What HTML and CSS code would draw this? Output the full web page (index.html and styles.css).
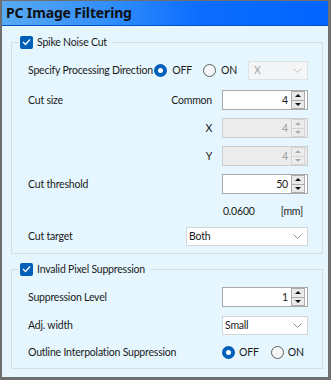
FILE: index.html
```html
<!doctype html>
<html lang="en">
	<head>
		<meta charset="UTF-8" />
		<meta name="viewport" content="width=device-width, initial-scale=1.0" />
		<title>PC Image Filtering</title>
		<link rel="stylesheet" href="styles.css">
	</head>
	<body>
		<div class="window">
			<div class="titlebar">PC Image Filtering</div>

			<fieldset class="group group-spike">
				<legend><span class="check"><svg width="9" height="8" viewBox="0 0 9 8"><polyline points="1,4 3.5,6.5 8,1.5" fill="none" stroke="#fff" stroke-width="1.3"/></svg></span>Spike Noise Cut</legend>

				<div class="row row-first">
					<span class="label">Specify Processing Direction</span>
					<span class="radio selected"></span><span class="radio-text">OFF</span>
					<span class="radio"></span><span class="radio-text">ON</span>
					<div class="select disabled select-dir">
						<span>X</span>
						<svg width="9" height="5" viewBox="0 0 9 5"><polyline points="0.5,0.5 4.5,4.5 8.5,0.5" fill="none" stroke="#c4c4c4"/></svg>
					</div>
				</div>

				<div class="row">
					<span class="label">Cut size</span>
					<span class="sub">Common</span>
					<div class="spin"><span class="value">4</span><span class="spin-btns"><span class="up"></span><span class="down"></span></span></div>
				</div>

				<div class="row">
					<span class="label"></span>
					<span class="sub">X</span>
					<div class="spin disabled"><span class="value">4</span><span class="spin-btns"><span class="up"></span><span class="down"></span></span></div>
				</div>

				<div class="row">
					<span class="label"></span>
					<span class="sub">Y</span>
					<div class="spin disabled"><span class="value">4</span><span class="spin-btns"><span class="up"></span><span class="down"></span></span></div>
				</div>

				<div class="row">
					<span class="label">Cut threshold</span>
					<div class="spin"><span class="value">50</span><span class="spin-btns"><span class="up"></span><span class="down"></span></span></div>
				</div>

				<div class="row row-mm">
					<span class="label"></span>
					<span class="mm-value">0.0600</span>
					<span class="unit">[mm]</span>
				</div>

				<div class="row row-last">
					<span class="label">Cut target</span>
					<div class="select select-wide">
						<span>Both</span>
						<svg width="9" height="5" viewBox="0 0 9 5"><polyline points="0.5,0.5 4.5,4.5 8.5,0.5" fill="none" stroke="#8a8a8a"/></svg>
					</div>
				</div>
			</fieldset>

			<fieldset class="group group-invalid">
				<legend><span class="check"><svg width="9" height="8" viewBox="0 0 9 8"><polyline points="1,4 3.5,6.5 8,1.5" fill="none" stroke="#fff" stroke-width="1.3"/></svg></span>Invalid Pixel Suppression</legend>

				<div class="row">
					<span class="label">Suppression Level</span>
					<div class="spin"><span class="value">1</span><span class="spin-btns"><span class="up"></span><span class="down"></span></span></div>
				</div>

				<div class="row">
					<span class="label">Adj. width</span>
					<div class="select select-mid">
						<span>Small</span>
						<svg width="9" height="5" viewBox="0 0 9 5"><polyline points="0.5,0.5 4.5,4.5 8.5,0.5" fill="none" stroke="#8a8a8a"/></svg>
					</div>
				</div>

				<div class="row row-last">
					<span class="label">Outline Interpolation Suppression</span>
					<div class="radios">
						<span class="radio selected"></span><span class="radio-text">OFF</span>
						<span class="radio"></span><span class="radio-text">ON</span>
					</div>
				</div>
			</fieldset>
		</div>
	</body>
</html>
```

FILE: styles.css
```css
body {
	margin: 0;
	background: #6f6f6f;
	font-family: Lato, "Noto Sans", sans-serif;
	font-size: 10.5px;
	letter-spacing: -0.2px;
	color: #1a1a1a;
}
.window {
	width: 326px;
	height: 376px;
	border-left: 2px solid #6f6f6f;
	border-top: 1px solid #6f6f6f;
	background: #e6f6fe;
	overflow: hidden;
}
.titlebar {
	height: 24px;
	line-height: 24px;
	padding-left: 4px;
	border-bottom: 1px solid #0052c8;
	background: linear-gradient(to right, #58aaf2 0%, #2f8cfb 35%, #0d6dff 60%, #0064ff 100%);
	font-family: "Noto Sans", sans-serif;
	font-weight: bold;
	font-size: 14px;
	letter-spacing: -0.15px;
	color: #111;
}
.group {
	margin: 8px 5px 0 9px;
	padding: 0 6px 5px 6px;
	border: 1px solid #d3dde3;
	min-inline-size: 0;
}
.group-invalid {
	margin-top: 7px;
	padding-bottom: 3px;
}
.group legend {
	display: flex;
	align-items: center;
	gap: 4px;
	height: 16px;
	padding: 0 5px 0 2px;
}
.check {
	display: flex;
	align-items: center;
	justify-content: center;
	width: 13px;
	height: 13px;
	border-radius: 2px;
	background: #005fb8;
}
.group > .row:first-of-type {
	margin-top: 6px;
}
.row {
	display: flex;
	align-items: center;
	height: 28px;
	padding: 0 8px 0 10px;
}
.row > *,
.radios > * {
	flex-shrink: 0;
}
.row > .label {
	flex: 1 1 auto;
	min-width: 0;
}
.row-first {
	margin-bottom: 2px;
}
.row-mm {
	height: 26px;
}
.row-last {
	height: 24px;
}
.group-invalid .row-last {
	height: 26px;
}
.label {
	white-space: nowrap;
}
.sub {
	margin-right: 10px;
	text-align: right;
}
.radio {
	width: 13px;
	height: 13px;
	box-sizing: border-box;
	border-radius: 50%;
	border: 1px solid #5d5d5d;
	background: #f4f6f7;
}
.radio.selected {
	border: 4px solid #005fb8;
	background: #fff;
}
.radio-text {
	margin: 0 12px 0 4px;
}
.row-first .radio-text {
	margin: 0 11px 0 5px;
}
.radios {
	display: flex;
	align-items: center;
	width: 86px;
}
.select {
	display: flex;
	align-items: center;
	justify-content: space-between;
	box-sizing: border-box;
	height: 19px;
	padding: 0 5px 0 2px;
	border: 1px solid #d2d6d8;
	background: #fff;
}
.select.disabled {
	background: #f3f5f6;
	border-color: #dde2e4;
	color: #a4a4a4;
	padding-left: 5px;
}
.select-dir {
	width: 60px;
}
.select-wide {
	width: 122px;
}
.select-mid {
	width: 86px;
}
.spin {
	display: flex;
	align-items: center;
	box-sizing: border-box;
	width: 86px;
	height: 20px;
	padding-right: 2px;
	border: 1px solid #a9a9a9;
	background: #fff;
}
.spin .value {
	flex: 1;
	text-align: right;
	padding-right: 3px;
}
.spin-btns {
	display: flex;
	flex-direction: column;
	width: 12px;
	height: 16px;
	border: 1px solid #adadad;
	background: #e9e9e9;
}
.spin-btns span {
	flex: 1;
	display: flex;
	align-items: center;
	justify-content: center;
}
.spin-btns .down {
	border-top: 1px solid #adadad;
}
.spin-btns .up::before {
	content: "";
	border-left: 3px solid transparent;
	border-right: 3px solid transparent;
	border-bottom: 3px solid #111;
}
.spin-btns .down::before {
	content: "";
	border-left: 3px solid transparent;
	border-right: 3px solid transparent;
	border-top: 3px solid #111;
}
.spin.disabled {
	background: #ececec;
	border-color: #cdcdcd;
	color: #a0a0a0;
}
.spin.disabled .spin-btns {
	border-color: #d4d4d4;
	background: #ececec;
}
.spin.disabled .down {
	border-top-color: #d4d4d4;
}
.spin.disabled .up::before {
	border-bottom-color: #acacac;
}
.spin.disabled .down::before {
	border-top-color: #acacac;
}
.mm-value {
	margin-right: 26px;
}
.unit {
	margin-right: 5px;
}
```
